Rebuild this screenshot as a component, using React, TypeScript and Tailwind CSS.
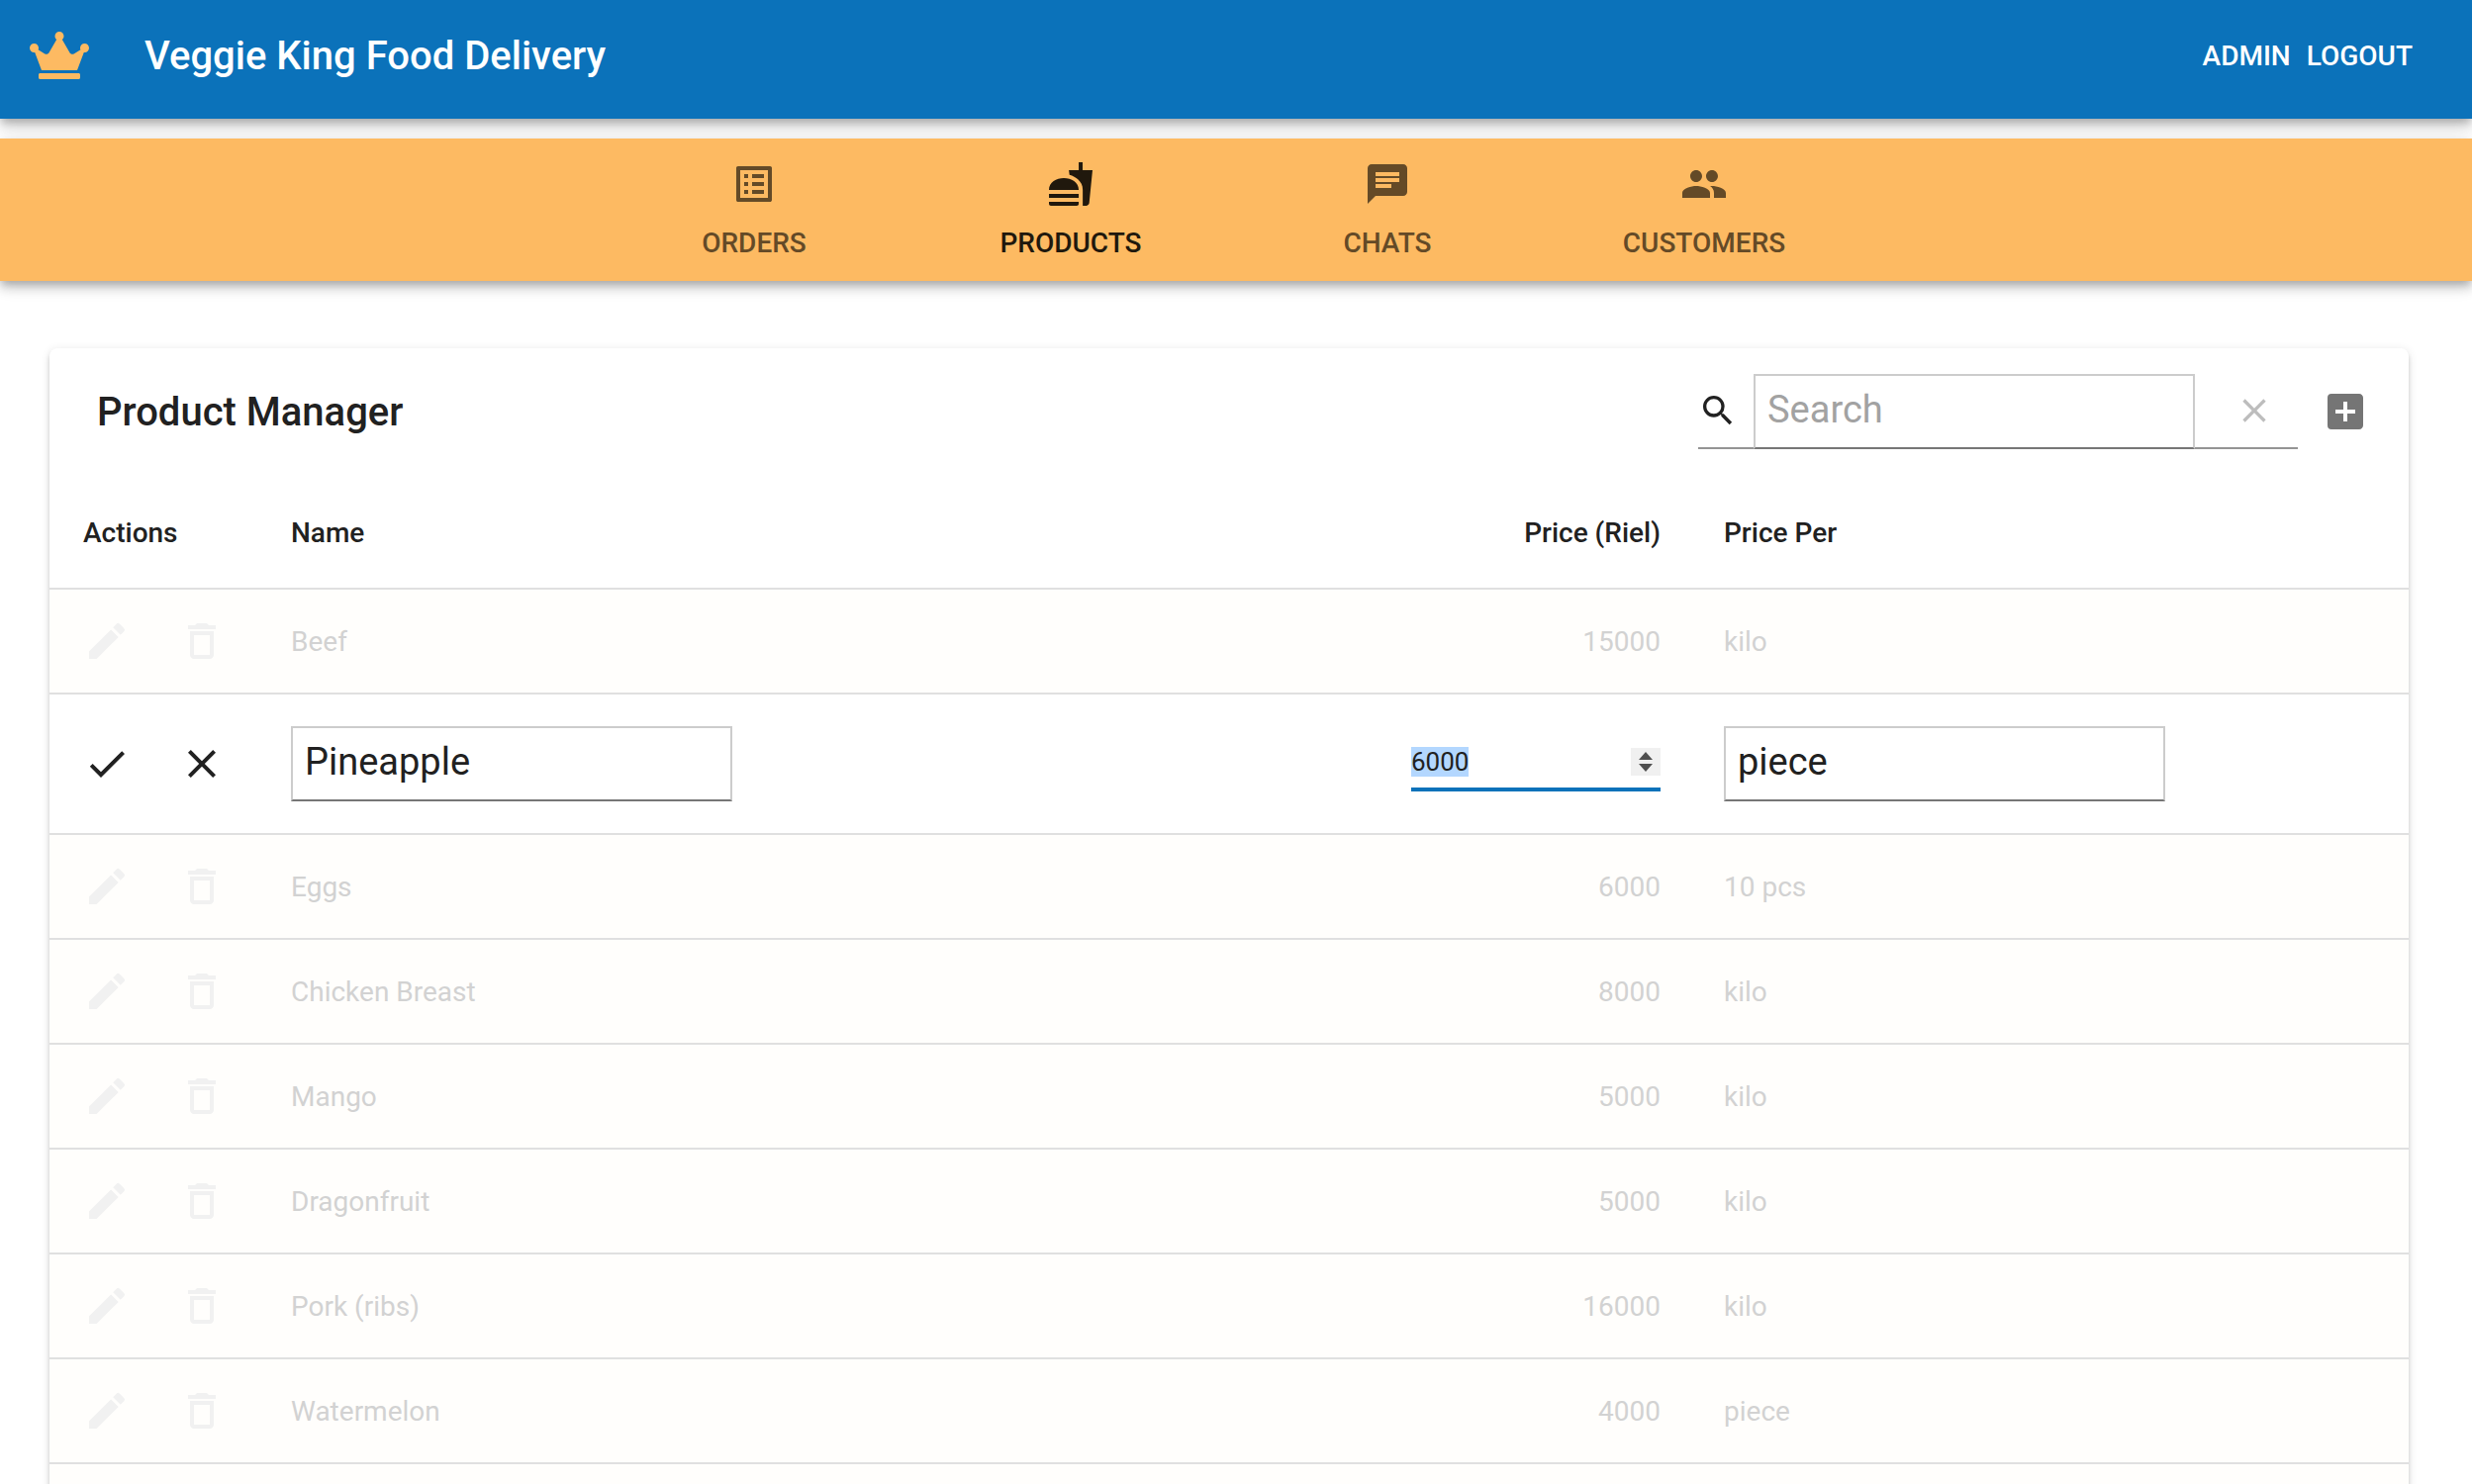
import { useEffect, useRef } from "react";
import { FaCrown } from "react-icons/fa";
import {
  MdAddBox,
  MdChat,
  MdCheck,
  MdClear,
  MdDeleteOutline,
  MdEdit,
  MdFastfood,
  MdListAlt,
  MdPeople,
  MdSearch,
} from "react-icons/md";

type Product = { name: string; price: number; per: string; editing?: boolean };

const products: Product[] = [
  { name: "Beef", price: 15000, per: "kilo" },
  { name: "Pineapple", price: 6000, per: "piece", editing: true },
  { name: "Eggs", price: 6000, per: "10 pcs" },
  { name: "Chicken Breast", price: 8000, per: "kilo" },
  { name: "Mango", price: 5000, per: "kilo" },
  { name: "Dragonfruit", price: 5000, per: "kilo" },
  { name: "Pork (ribs)", price: 16000, per: "kilo" },
  { name: "Watermelon", price: 4000, per: "piece" },
];

const tabs = [
  { label: "ORDERS", Icon: MdListAlt },
  { label: "PRODUCTS", Icon: MdFastfood, active: true },
  { label: "CHATS", Icon: MdChat },
  { label: "CUSTOMERS", Icon: MdPeople },
];

const fieldClass =
  "block h-[76px] w-[446px] rounded-none border-2 border-x-[#cccccc] border-t-[#cccccc] border-b-[#767676] bg-white px-3 pb-1 text-[38px] leading-[48px] text-[#212121] outline-none placeholder:text-[#a2a2a2]";

function Header() {
  return (
    <header className="flex h-[120px] items-center bg-[#0b72ba] px-[30px] pb-2 text-white shadow-[0_4px_8px_-2px_rgba(0,0,0,0.2),0_8px_10px_0_rgba(0,0,0,0.14),0_2px_20px_0_rgba(0,0,0,0.12)]">
      <FaCrown className="h-12 w-[60px] text-[#fdba62]" aria-hidden="true" />
      <h1 className="ml-14 flex-1 pt-0.5 text-[40px] leading-[64px] font-medium">Veggie King Food Delivery</h1>
      <div className="mr-[30px] flex gap-4 pt-0.5 text-[28px] leading-10 font-medium">
        <button type="button" className="cursor-pointer">ADMIN</button>
        <button type="button" className="cursor-pointer">LOGOUT</button>
      </div>
    </header>
  );
}

function NavTabs() {
  return (
    <nav
      aria-label="Sections"
      className="relative mt-5 flex h-36 justify-center bg-[#fdba62] pt-2 pr-3.5 shadow-[0_4px_8px_-2px_rgba(0,0,0,0.2),0_8px_10px_0_rgba(0,0,0,0.14),0_2px_20px_0_rgba(0,0,0,0.12)]"
    >
      {tabs.map(({ label, Icon, active }) => (
        <button
          key={label}
          type="button"
          aria-current={active ? "page" : undefined}
          className={`flex w-80 cursor-pointer flex-col items-center justify-center gap-3 text-[28px] leading-[48px] font-medium ${
            active ? "text-[#20180d]" : "text-[#644a27]"
          }`}
        >
          <Icon className="size-12" aria-hidden="true" />
          {label}
        </button>
      ))}
    </nav>
  );
}

function Toolbar() {
  return (
    <div className="flex h-32 items-center pr-10 pl-12">
      <h2 className="flex-1 pt-0.5 text-[40px] leading-[64px] font-medium">Product Manager</h2>
      <div className="flex items-center border-b-2 border-[#949494]">
        <MdSearch className="mr-4 size-10" aria-hidden="true" />
        <input type="search" aria-label="Search" placeholder="Search" className={`${fieldClass} -mb-0.5`} />
        <button type="button" aria-label="Clear search" className="mr-3 ml-7 flex size-16 cursor-pointer items-center justify-center text-[#bdbdbd]">
          <MdClear className="size-10" />
        </button>
      </div>
      <button type="button" aria-label="Add product" className="ml-6 cursor-pointer text-[#757575]">
        <MdAddBox className="size-12" />
      </button>
    </div>
  );
}

function PriceField({ value }: { value: number }) {
  const ref = useRef<HTMLInputElement>(null);

  useEffect(() => {
    ref.current?.focus();
    ref.current?.select();
  }, []);

  return (
    <div className="ml-auto flex h-14 w-[252px] items-center border-b-4 border-[#0b72ba]">
      <input
        ref={ref}
        type="number"
        aria-label="Price in Riel"
        defaultValue={value}
        className="min-w-0 flex-1 appearance-none bg-transparent text-left text-[26px] leading-[30px] outline-none selection:bg-[#b3d7ff] selection:text-[#212121] [-moz-appearance:textfield] [&::-webkit-inner-spin-button]:appearance-none"
      />
      <div className="flex h-7 w-[30px] flex-col items-center justify-center gap-1 bg-[#f0f0f0] text-[#4f4f4f]">
        <button type="button" tabIndex={-1} aria-label="Increase price" onClick={() => ref.current?.stepUp()}>
          <svg viewBox="0 0 14 8" className="block h-2 w-3.5" fill="currentColor">
            <path d="M7 0 14 8H0z" />
          </svg>
        </button>
        <button type="button" tabIndex={-1} aria-label="Decrease price" onClick={() => ref.current?.stepDown()}>
          <svg viewBox="0 0 14 8" className="block h-2 w-3.5" fill="currentColor">
            <path d="M0 0h14L7 8z" />
          </svg>
        </button>
      </div>
    </div>
  );
}

function EditRow({ product }: { product: Product }) {
  return (
    <tr className="h-[142px] border-b-2 border-[#e0e0e0] bg-white">
      <td className="pl-[34px]">
        <div className="flex gap-12">
          <button type="button" aria-label="Save" className="cursor-pointer">
            <MdCheck className="size-12" />
          </button>
          <button type="button" aria-label="Cancel" className="cursor-pointer">
            <MdClear className="size-12" />
          </button>
        </div>
      </td>
      <td className="px-8">
        <input type="text" aria-label="Name" defaultValue={product.name} className={fieldClass} />
      </td>
      <td className="px-8">
        <PriceField value={product.price} />
      </td>
      <td className="px-8">
        <input type="text" aria-label="Price per" defaultValue={product.per} className={fieldClass} />
      </td>
    </tr>
  );
}

function ProductRow({ product }: { product: Product }) {
  return (
    <tr className="h-[106px] border-b-2 border-[#e0e0e0] bg-[#fffefc] text-[#d2d2d2]">
      <td className="pl-[34px]">
        <div className="flex gap-12 text-[#f1f1f1]">
          <button type="button" disabled aria-label={`Edit ${product.name}`}>
            <MdEdit className="size-12" />
          </button>
          <button type="button" disabled aria-label={`Delete ${product.name}`}>
            <MdDeleteOutline className="size-12" />
          </button>
        </div>
      </td>
      <td className="px-8 pt-0.5">{product.name}</td>
      <td className="px-8 pt-0.5 text-right">{product.price}</td>
      <td className="px-8 pt-0.5">{product.per}</td>
    </tr>
  );
}

export default function App() {
  return (
    <div className="h-screen overflow-hidden bg-white font-[Roboto,sans-serif] text-[#212121]">
      <Header />
      <NavTabs />
      <main className="mt-[68px] mr-16 ml-[50px] rounded-lg bg-white shadow-[0_6px_2px_-4px_rgba(0,0,0,0.2),0_4px_4px_0_rgba(0,0,0,0.14),0_2px_10px_0_rgba(0,0,0,0.12)]">
        <Toolbar />
        <table className="w-full table-fixed border-collapse text-[28px] leading-10">
          <thead>
            <tr className="h-[115px] border-b-2 border-[#e0e0e0] text-left">
              <th scope="col" className="w-[212px] pt-1 pl-[34px] font-medium">Actions</th>
              <th scope="col" className="px-8 pt-1 font-medium">Name</th>
              <th scope="col" className="w-[316px] px-8 pt-1 text-right font-medium">Price (Riel)</th>
              <th scope="col" className="w-[724px] px-8 pt-1 font-medium">Price Per</th>
            </tr>
          </thead>
          <tbody>
            {products.map((product) =>
              product.editing ? (
                <EditRow key={product.name} product={product} />
              ) : (
                <ProductRow key={product.name} product={product} />
              ),
            )}
            <tr className="h-[106px] bg-[#fffefc]">
              <td colSpan={4} />
            </tr>
          </tbody>
        </table>
      </main>
    </div>
  );
}
